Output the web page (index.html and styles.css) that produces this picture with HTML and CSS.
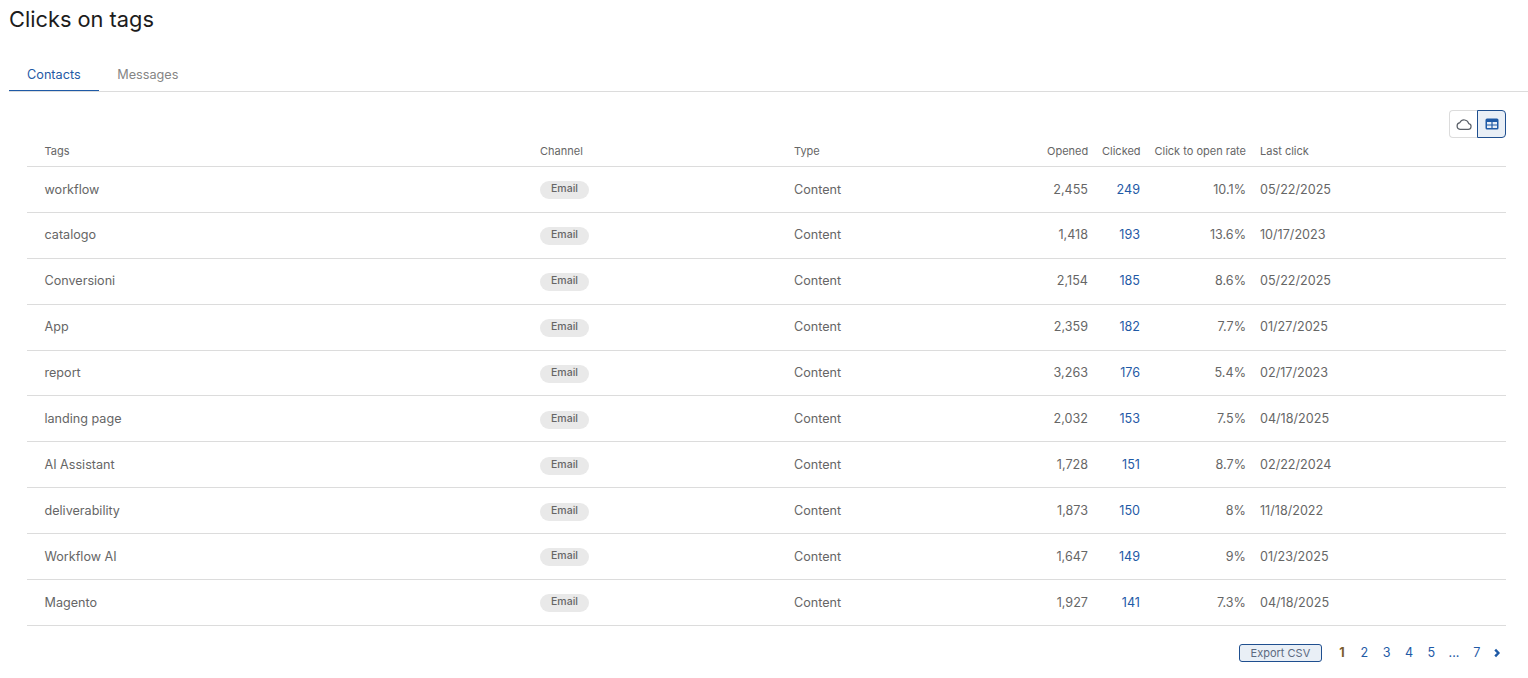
FILE: index.html
```html
<!DOCTYPE html>
<html lang="en">
<head>
<meta charset="utf-8">
<title>Clicks on tags</title>
<link rel="stylesheet" href="styles.css">
</head>
<body>
<h1 class="title">Clicks on tags</h1>
<nav class="tabs">
  <a class="tab tab-active">Contacts</a>
  <a class="tab">Messages</a>
</nav>
<main class="content">
  <div class="toolbar">
    <div class="toggle">
      <button class="toggle-btn" aria-label="Cloud view">
        <svg width="16" height="16" viewBox="0 0 16 16" fill="none" stroke="#5a6068" stroke-width="1.2" stroke-linejoin="round"><path d="M4 13.4h8.2a2.9 2.9 0 0 0 .5-5.75A4.7 4.7 0 0 0 3.9 6.6 3.45 3.45 0 0 0 4 13.4z"/></svg>
      </button>
      <button class="toggle-btn toggle-on" aria-label="Table view">
        <svg width="14" height="12" viewBox="0 0 14 12"><rect x="0.5" y="0.5" width="13" height="11" rx="1.5" fill="#1f5aa6"/><path d="M2 4h4.4v2.4H2zM7.6 4H12v2.4H7.6zM2 7.6h4.4V10H2zM7.6 7.6H12V10H7.6z" fill="#e8eef6"/></svg>
      </button>
    </div>
  </div>
  <table class="grid">
    <colgroup>
      <col class="c-tag"><col class="c-channel"><col class="c-type"><col class="c-opened"><col class="c-clicked"><col class="c-rate"><col class="c-last">
    </colgroup>
    <thead>
      <tr><th class="first">Tags</th><th>Channel</th><th>Type</th><th class="num">Opened</th><th class="num">Clicked</th><th class="num">Click to open rate</th><th>Last click</th></tr>
    </thead>
    <tbody>
      <tr><td class="first">workflow</td><td><span class="pill">Email</span></td><td>Content</td><td class="num">2,455</td><td class="num link">249</td><td class="num">10.1%</td><td>05/22/2025</td></tr>
      <tr><td class="first">catalogo</td><td><span class="pill">Email</span></td><td>Content</td><td class="num">1,418</td><td class="num link">193</td><td class="num">13.6%</td><td>10/17/2023</td></tr>
      <tr><td class="first">Conversioni</td><td><span class="pill">Email</span></td><td>Content</td><td class="num">2,154</td><td class="num link">185</td><td class="num">8.6%</td><td>05/22/2025</td></tr>
      <tr><td class="first">App</td><td><span class="pill">Email</span></td><td>Content</td><td class="num">2,359</td><td class="num link">182</td><td class="num">7.7%</td><td>01/27/2025</td></tr>
      <tr><td class="first">report</td><td><span class="pill">Email</span></td><td>Content</td><td class="num">3,263</td><td class="num link">176</td><td class="num">5.4%</td><td>02/17/2023</td></tr>
      <tr><td class="first">landing page</td><td><span class="pill">Email</span></td><td>Content</td><td class="num">2,032</td><td class="num link">153</td><td class="num">7.5%</td><td>04/18/2025</td></tr>
      <tr><td class="first">AI Assistant</td><td><span class="pill">Email</span></td><td>Content</td><td class="num">1,728</td><td class="num link">151</td><td class="num">8.7%</td><td>02/22/2024</td></tr>
      <tr><td class="first">deliverability</td><td><span class="pill">Email</span></td><td>Content</td><td class="num">1,873</td><td class="num link">150</td><td class="num">8%</td><td>11/18/2022</td></tr>
      <tr><td class="first">Workflow AI</td><td><span class="pill">Email</span></td><td>Content</td><td class="num">1,647</td><td class="num link">149</td><td class="num">9%</td><td>01/23/2025</td></tr>
      <tr><td class="first">Magento</td><td><span class="pill">Email</span></td><td>Content</td><td class="num">1,927</td><td class="num link">141</td><td class="num">7.3%</td><td>04/18/2025</td></tr>
    </tbody>
  </table>
  <div class="footer">
    <button class="export">Export CSV</button>
    <div class="pager">
      <span class="page page-current">1</span>
      <a class="page">2</a>
      <a class="page">3</a>
      <a class="page">4</a>
      <a class="page">5</a>
      <span class="page page-gap">...</span>
      <a class="page">7</a>
      <a class="page page-next" aria-label="Next"><svg width="8" height="10" viewBox="0 0 8 10" fill="none" stroke="#1f5aa6" stroke-width="2.4"><path d="M2.2 1.6 5.4 5 2.2 8.4"/></svg></a>
    </div>
  </div>
</main>
</body>
</html>
```
FILE: styles.css
```css
* { box-sizing: border-box; }
html, body { margin: 0; padding: 0; }
body {
  font-family: Inter, "Liberation Sans", sans-serif;
  background: #fff;
  color: #666;
  font-size: 12.6px;
  height: 678px;
  overflow: hidden;
}
.title {
  margin: 0;
  padding-left: 9px;
  height: 56px;
  padding-top: 5px;
  font-size: 21.8px;
  line-height: 28px;
  font-weight: 400;
  color: #1c1c1c;
}
.tabs {
  display: flex;
  margin-left: 9px;
  height: 36px;
  border-bottom: 1px solid #dcdcdc;
}
.tab {
  height: 35px;
  padding: 1px 18.5px 0 18px;
  line-height: 36px;
  font-size: 12.7px;
  color: #858585;
}
.tab-active {
  color: #1f5aa6;
  border-bottom: 1px solid #1f5aa6;
}
.content {
  margin: 0 22px 0 27px;
}
.toolbar {
  display: flex;
  justify-content: flex-end;
  padding-top: 18px;
  height: 46px;
}
.toggle { display: flex; height: 28px; }
.toggle-btn {
  width: 28px;
  height: 28px;
  padding: 0;
  display: flex;
  align-items: center;
  justify-content: center;
  background: #fff;
  border: 1px solid #dcdcdc;
  border-right: 0;
  border-radius: 4px 0 0 4px;
}
.toggle-on {
  width: 29px;
  background: #e9eff6;
  border: 1px solid #1f4f8f;
  border-radius: 0 4px 4px 0;
}
.grid {
  width: 1479px;
  table-layout: fixed;
  border-collapse: collapse;
}
.c-tag { width: 506px; }
.c-channel { width: 254px; }
.c-type { width: 253px; }
.c-opened { width: 55px; }
.c-clicked { width: 52px; }
.c-rate { width: 106px; }
.c-last { width: 253px; }
th, td {
  padding: 0 7px;
  text-align: left;
  border-bottom: 1px solid #dcdcdc;
  white-space: nowrap;
}
th {
  height: 28.5px;
  padding-bottom: 2px;
  font-size: 11px;
  font-weight: 400;
  color: #666;
  vertical-align: middle;
}
td {
  height: 45.9px;
  padding-bottom: 0.7px;
  font-size: 12.6px;
  color: #666;
}
th.first, td.first { padding-left: 17.5px; }
.num { text-align: right; }
td.link { color: #1f5aa6; }
.pill {
  display: inline-block;
  width: 49px;
  height: 18px;
  margin-top: 2.5px;
  line-height: 15px;
  border-radius: 9px;
  background: #e9e9e9;
  color: #666;
  font-size: 10.5px;
  font-weight: 500;
  text-align: center;
  vertical-align: middle;
}
.footer {
  display: flex;
  justify-content: flex-end;
  align-items: center;
  padding-top: 18px;
}
.export {
  width: 83px;
  height: 18px;
  padding: 0;
  background: #e9eff6;
  border: 1px solid #1f4f8f;
  border-radius: 3px;
  color: #5c6a80;
  font-family: inherit;
  font-size: 11px;
  line-height: 16px;
}
.pager {
  display: flex;
  align-items: center;
  margin-left: 9px;
  margin-right: 1px;
  font-size: 12.6px;
}
.page {
  display: block;
  width: 22.3px;
  text-align: center;
  color: #1f5aa6;
}
.page-current { color: #7a5c2e; font-weight: 700; }
.page-gap { width: 23.3px; }
.page-next { display: flex; justify-content: center; width: 16px; margin-left: 1px; }
```
